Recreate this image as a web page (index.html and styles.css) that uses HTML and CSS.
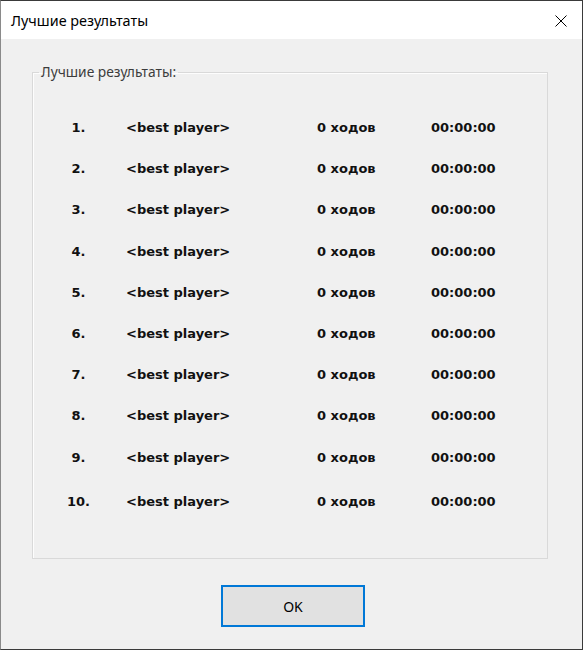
FILE: index.html
```html
<!DOCTYPE html>
<html lang="ru">
<head>
<meta charset="utf-8">
<title>Лучшие результаты</title>
<link rel="stylesheet" href="styles.css">
</head>
<body>
<div class="window">
  <div class="titlebar">
    <span class="title">Лучшие результаты</span>
    <span class="close" aria-label="Закрыть">
      <svg width="12" height="12" viewBox="0 0 12 12"><path d="M0.5 0.5 L11.5 11.5 M11.5 0.5 L0.5 11.5" stroke="#000" stroke-width="1" fill="none"/></svg>
    </span>
  </div>
  <div class="content">
    <fieldset class="group">
      <legend class="legend">Лучшие результаты:</legend>
      <div class="table">
        <div class="row"><span class="num">1.</span><span class="name">&lt;best player&gt;</span><span class="moves">0 ходов</span><span class="time">00:00:00</span></div>
        <div class="row"><span class="num">2.</span><span class="name">&lt;best player&gt;</span><span class="moves">0 ходов</span><span class="time">00:00:00</span></div>
        <div class="row"><span class="num">3.</span><span class="name">&lt;best player&gt;</span><span class="moves">0 ходов</span><span class="time">00:00:00</span></div>
        <div class="row"><span class="num">4.</span><span class="name">&lt;best player&gt;</span><span class="moves">0 ходов</span><span class="time">00:00:00</span></div>
        <div class="row"><span class="num">5.</span><span class="name">&lt;best player&gt;</span><span class="moves">0 ходов</span><span class="time">00:00:00</span></div>
        <div class="row"><span class="num">6.</span><span class="name">&lt;best player&gt;</span><span class="moves">0 ходов</span><span class="time">00:00:00</span></div>
        <div class="row"><span class="num">7.</span><span class="name">&lt;best player&gt;</span><span class="moves">0 ходов</span><span class="time">00:00:00</span></div>
        <div class="row"><span class="num">8.</span><span class="name">&lt;best player&gt;</span><span class="moves">0 ходов</span><span class="time">00:00:00</span></div>
        <div class="row"><span class="num">9.</span><span class="name">&lt;best player&gt;</span><span class="moves">0 ходов</span><span class="time">00:00:00</span></div>
        <div class="row row-last"><span class="num">10.</span><span class="name">&lt;best player&gt;</span><span class="moves">0 ходов</span><span class="time">00:00:00</span></div>
      </div>
    </fieldset>
    <div class="actions">
      <button class="ok" type="button">OK</button>
    </div>
  </div>
</div>
</body>
</html>
```
FILE: styles.css
```css
html, body {
  margin: 0;
  padding: 0;
  background: #f0f0f0;
}
.window {
  box-sizing: border-box;
  width: 583px;
  height: 650px;
  border: 1px solid #3a3a3a;
  border-left-color: #8a8a8a;
  background: #f0f0f0;
  display: flex;
  flex-direction: column;
  font-family: "Noto Sans", "Open Sans", sans-serif;
}
.titlebar {
  height: 38px;
  background: #ffffff;
  display: flex;
  align-items: center;
  justify-content: space-between;
  padding: 0 15px 0 10px;
}
.title {
  font-size: 14.4px;
  color: #000;
}
.close {
  display: flex;
  width: 12px;
  height: 12px;
  margin-top: 1px;
}
.content {
  flex: 1;
  display: flex;
  flex-direction: column;
  padding: 25px 34px 0 31px;
}
.group {
  margin: 0;
  padding: 0;
  border: 1px solid #d9d9d9;
  box-shadow: 1px 1px 0 #fdfdfd inset;
  height: 495px;
  box-sizing: border-box;
}
.legend {
  font-size: 13.8px;
  color: #3c3c3c;
  padding: 0 2px;
  margin-left: 6px;
  line-height: 16px;
}
.table {
  display: grid;
  grid-auto-rows: 41.2px;
  padding: 27px 0 0 19px;
  font-family: "DejaVu Sans", Verdana, sans-serif;
  font-weight: bold;
  font-size: 13px;
  color: #111;
}
.row {
  display: grid;
  grid-template-columns: 53px 212px 114px 1fr;
  align-items: center;
}
.row-last {
  margin-top: 7px;
}
.num {
  text-align: center;
}
.name {
  padding-left: 21px;
}
.actions {
  display: flex;
  justify-content: center;
  padding-top: 26px;
  padding-left: 6px;
}
.ok {
  box-sizing: border-box;
  width: 144px;
  height: 42px;
  background: #e1e1e1;
  border: 2px solid #0078d7;
  font-family: "Noto Sans", "Open Sans", sans-serif;
  font-size: 14px;
  color: #000;
  padding: 0;
  margin: 0;
}
```
